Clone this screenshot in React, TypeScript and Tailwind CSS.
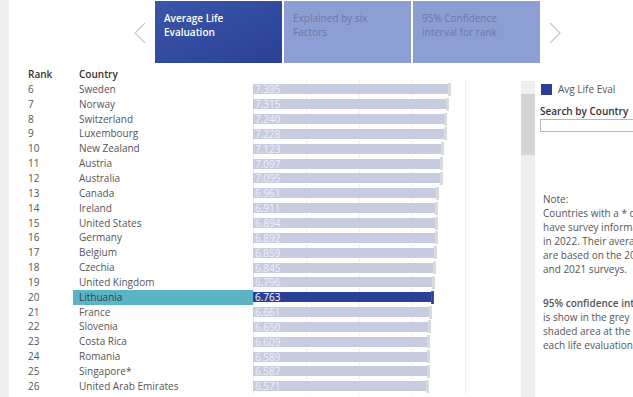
import React from "react";

const rows = [
  { rank: 6, country: "Sweden", value: 7.395 },
  { rank: 7, country: "Norway", value: 7.315 },
  { rank: 8, country: "Switzerland", value: 7.24 },
  { rank: 9, country: "Luxembourg", value: 7.228 },
  { rank: 10, country: "New Zealand", value: 7.123 },
  { rank: 11, country: "Austria", value: 7.097 },
  { rank: 12, country: "Australia", value: 7.095 },
  { rank: 13, country: "Canada", value: 6.961 },
  { rank: 14, country: "Ireland", value: 6.911 },
  { rank: 15, country: "United States", value: 6.894 },
  { rank: 16, country: "Germany", value: 6.892 },
  { rank: 17, country: "Belgium", value: 6.859 },
  { rank: 18, country: "Czechia", value: 6.845 },
  { rank: 19, country: "United Kingdom", value: 6.796 },
  { rank: 20, country: "Lithuania", value: 6.763 },
  { rank: 21, country: "France", value: 6.661 },
  { rank: 22, country: "Slovenia", value: 6.65 },
  { rank: 23, country: "Costa Rica", value: 6.609 },
  { rank: 24, country: "Romania", value: 6.589 },
  { rank: 25, country: "Singapore*", value: 6.587 },
  { rank: 26, country: "United Arab Emirates", value: 6.571 },
];

// px per life-evaluation point
const SCALE = 26.5;

const Chevron = ({ dir }: { dir: "left" | "right" }) => (
  <svg width="12" height="22" viewBox="0 0 12 22" className="mt-[21px]">
    <polyline
      points={dir === "left" ? "11,1 1,11 11,21" : "1,1 11,11 1,21"}
      fill="none"
      stroke="#c9c9c9"
      strokeWidth="1.3"
    />
  </svg>
);

const Tab = ({ label, active }: { label: [string, string]; active?: boolean }) => (
  <div
    className={`w-[127px] h-[62px] pl-[9px] pt-[10px] text-[10px] leading-[14px] ${
      active
        ? "bg-gradient-to-br from-[#3a55aa] to-[#2a4194] text-white font-semibold"
        : "bg-[#8d9ed5] text-[#6a76a6]"
    }`}
  >
    <div>{label[0]}</div>
    <div>{label[1]}</div>
  </div>
);

export default function App() {
  return (
    <div className="w-[633px] h-[397px] overflow-hidden bg-white flex font-['Open_Sans',sans-serif]">
      <div className="w-[9px] shrink-0 bg-[#efefef]" />

      <div className="flex-1 flex flex-col min-w-0">
        <div className="h-[66px] shrink-0 flex items-start pl-[125px] pt-[1px]">
          <Chevron dir="left" />
          <div className="flex gap-[2px] ml-[9px] mr-[9px]">
            <Tab label={["Average Life", "Evaluation"]} active />
            <Tab label={["Explained by six", "Factors"]} />
            <Tab label={["95% Confidence", "interval for rank"]} />
          </div>
          <Chevron dir="right" />
        </div>

        <div className="flex flex-1 min-h-0">
          {/* table */}
          <div className="pl-[19px] pt-[1px] shrink-0 text-[10px] text-[#555]">
            <div className="flex h-[15px] items-center font-semibold text-[#333]">
              <div className="w-[45px]">Rank</div>
              <div className="w-[180px] pl-[6px]">Country</div>
              <div className="w-[268px] h-full relative">
                {[53, 106, 159, 212].map((x) => (
                  <div key={x} className="absolute top-[13px] bottom-0 w-px bg-[#f0f0f0]" style={{ left: x }} />
                ))}
              </div>
            </div>
            {rows.map((r) => {
              const hl = r.country === "Lithuania";
              const w = r.value * SCALE;
              return (
                <div key={r.rank} className="flex h-[14.85px] items-center">
                  <div className="w-[45px]">{r.rank}</div>
                  <div
                    className={`w-[180px] h-full flex items-center pl-[6px] ${
                      hl ? "bg-[#5bb4c4] text-[#2f3f48]" : ""
                    }`}
                  >
                    {r.country}
                  </div>
                  <div className="w-[268px] h-full relative flex items-center">
                    <div className="absolute left-0 top-0 bottom-0 w-px bg-[#ebebeb]" />
                    {[53, 106, 159, 212].map((x) => (
                      <div key={x} className="absolute top-0 bottom-0 w-px bg-[#f0f0f0]" style={{ left: x }} />
                    ))}
                    <div
                      className={`relative h-[10px] flex items-center pl-[2px] text-[10px] leading-none ${
                        hl ? "bg-[#2a3f96] text-white" : "bg-[#c7cce1] text-[#eef0f7]"
                      }`}
                      style={{ width: w }}
                    >
                      {r.value.toFixed(3)}
                    </div>
                    <div
                      className={`absolute h-[13px] w-[3px] ${
                        hl ? "border border-[#555] bg-[#2a3f96]" : "bg-[#dadada]"
                      }`}
                      style={{ left: w - 1 }}
                    />
                  </div>
                </div>
              );
            })}
          </div>

          {/* scrollbar */}
          <div className="w-[14px] shrink-0 mt-[15px] bg-[#efefef]">
            <div className="mt-[13px] h-[61px] bg-[#d4d4d4]" />
          </div>

          {/* side panel */}
          <div className="ml-[5px] shrink-0 w-[120px] flex flex-col text-[10px] text-[#555]">
            <div className="mt-[18px] h-[11px] flex items-center">
              <div className="ml-[1px] w-[11px] h-[11px] bg-[#2b4099]" />
              <span className="ml-[6px]">Avg Life Eval</span>
            </div>
            <div className="mt-[10px] font-semibold text-[#333] leading-[12px]">Search by Country</div>
            <div className="mt-[2px] h-[13px] w-[120px] border border-[#b8b8b8]" />
            <div className="mt-[60px] ml-[3px] leading-[14px] whitespace-nowrap">
              <div>Note:</div>
              <div>Countries with a * do not</div>
              <div>have survey information</div>
              <div>in 2022. Their averages</div>
              <div>are based on the 2019, 2020</div>
              <div>and 2021 surveys.</div>
              <div className="mt-[20px] font-semibold">95% confidence interval</div>
              <div>is show in the grey</div>
              <div>shaded area at the end of</div>
              <div>each life evaluation bar.</div>
            </div>
          </div>
        </div>
      </div>
    </div>
  );
}
